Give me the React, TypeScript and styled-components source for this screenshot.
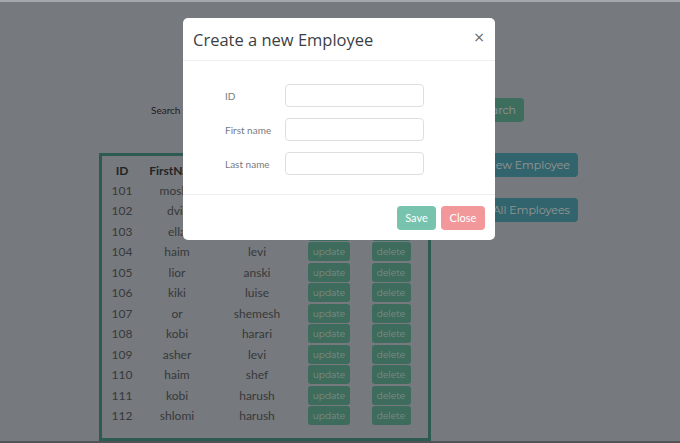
import React from "react";
import styled, { createGlobalStyle } from "styled-components";

const GlobalStyle = createGlobalStyle`
  html, body { margin: 0; padding: 0; }
  body { background: #c5cad0; font-family: "Lato", "Noto Sans", sans-serif; }
  * { box-sizing: border-box; }
`;

const Page = styled.div`
  position: relative;
  width: 680px;
  height: 443px;
  overflow: hidden;
  background: #c5cad0;
`;

const SearchRow = styled.div`
  display: flex;
  align-items: center;
  gap: 6px;
  padding: 98px 0 0 151px;
  height: 122px;
`;

const SearchLabel = styled.label`
  font-size: 10px;
  color: #33373b;
`;

const SearchInput = styled.input`
  width: 278px;
  height: 24px;
  border: 1px solid #ccc;
  border-radius: 4px;
  background: #fff;
`;

const ActionButton = styled.button`
  height: 24px;
  border: none;
  border-radius: 4px;
  background: ${(p) => p.color};
  color: #f4f6f6;
  font-family: "Montserrat", "DejaVu Sans", sans-serif;
  font-size: 11px;
  padding: 0 8px;
  text-align: center;
  white-space: nowrap;
`;

const MainRow = styled.div`
  display: flex;
  align-items: flex-start;
  padding: 31px 0 0 99px;
`;

const TableBox = styled.div`
  width: 332px;
  height: 288px;
  border: 3px solid #4b9687;
  padding-top: 5px;
`;

const Grid = styled.div`
  display: grid;
  grid-template-columns: 40px 70px 90px 54px 70px;
`;

const HeadCell = styled.div`
  height: 19px;
  display: flex;
  align-items: center;
  justify-content: center;
  font-weight: 700;
  font-size: 12px;
  color: #3a3e42;
`;

const Cell = styled.div`
  height: 20.5px;
  display: flex;
  align-items: center;
  justify-content: center;
  font-size: 12px;
  color: #5c6165;
`;

const RowButton = styled.button<{ $w: number }>`
  width: ${(p) => p.$w}px;
  height: 19px;
  border: none;
  border-radius: 3px;
  background: #67b499;
  color: rgba(255, 255, 255, 0.7);
  font-family: "Montserrat", "DejaVu Sans", sans-serif;
  font-size: 9px;
  padding: 0;
`;

const SideColumn = styled.div`
  display: flex;
  flex-direction: column;
  align-items: flex-end;
  gap: 21px;
  width: 147px;
`;

const Backdrop = styled.div`
  position: absolute;
  inset: 0;
  background: rgba(0, 0, 0, 0.4);
  background-clip: padding-box;
  border-top: 2px solid #a5a8ac;
  border-bottom: 2px solid #505356;
`;

const Modal = styled.div`
  position: absolute;
  left: 183px;
  top: 18px;
  width: 312px;
  height: 222px;
  background: #fff;
  border-radius: 5px;
  display: flex;
  flex-direction: column;
`;

const ModalHeader = styled.div`
  height: 43px;
  display: flex;
  align-items: center;
  justify-content: space-between;
  padding: 0 10px;
  border-bottom: 1px solid #eceeef;
`;

const ModalTitle = styled.h5`
  margin: 0;
  font-family: "Open Sans", sans-serif;
  font-weight: 400;
  font-size: 16.5px;
  color: #3b3f44;
`;

const CloseX = styled.span`
  font-family: "DejaVu Sans", sans-serif;
  font-size: 14px;
  color: #666;
  margin-top: -4px;
`;

const ModalBody = styled.div`
  flex: 1;
  display: flex;
  flex-direction: column;
  gap: 11px;
  padding: 23px 0 0 42px;
  border-bottom: 1px solid #eceeef;
`;

const FormRow = styled.div`
  display: flex;
  align-items: center;
`;

const FormLabel = styled.label`
  width: 60px;
  font-size: 10px;
  color: #777b80;
`;

const FormInput = styled.input`
  width: 139px;
  height: 23px;
  border: 1px solid #dcdfe2;
  border-radius: 4px;
  background: #fff;
`;

const ModalFooter = styled.div`
  height: 45px;
  display: flex;
  align-items: center;
  justify-content: flex-end;
  gap: 5px;
  padding: 0 10px 0 0;
`;

const FooterButton = styled.button<{ $w: number }>`
  width: ${(p) => p.$w}px;
  height: 24px;
  border: none;
  border-radius: 4px;
  background: ${(p) => p.color};
  color: #fff;
  font-family: "Lato", sans-serif;
  font-size: 11px;
  padding: 0;
`;

const employees = [
  ["101", "moshe", "cohen"],
  ["102", "dvir", "levi"],
  ["103", "ella", "ronen"],
  ["104", "haim", "levi"],
  ["105", "lior", "anski"],
  ["106", "kiki", "luise"],
  ["107", "or", "shemesh"],
  ["108", "kobi", "harari"],
  ["109", "asher", "levi"],
  ["110", "haim", "shef"],
  ["111", "kobi", "harush"],
  ["112", "shlomi", "harush"],
];

export default function App() {
  return (
    <>
      <GlobalStyle />
      <Page>
        <SearchRow>
          <SearchLabel>Search</SearchLabel>
          <SearchInput />
          <ActionButton color="#66b69c">Search</ActionButton>
        </SearchRow>
        <MainRow>
          <TableBox>
            <Grid>
              <HeadCell>ID</HeadCell>
              <HeadCell>FirstName</HeadCell>
              <HeadCell>LastName</HeadCell>
              <HeadCell>Update</HeadCell>
              <HeadCell>Delete</HeadCell>
              {employees.map(([id, first, last]) => (
                <React.Fragment key={id}>
                  <Cell>{id}</Cell>
                  <Cell>{first}</Cell>
                  <Cell>{last}</Cell>
                  <Cell>
                    <RowButton $w={42}>update</RowButton>
                  </Cell>
                  <Cell>
                    <RowButton $w={39}>delete</RowButton>
                  </Cell>
                </React.Fragment>
              ))}
            </Grid>
          </TableBox>
          <SideColumn>
            <ActionButton color="#53a7b4">Add New Employee</ActionButton>
            <ActionButton color="#53a7b4">View All Employees</ActionButton>
          </SideColumn>
        </MainRow>
        <Backdrop />
        <Modal>
          <ModalHeader>
            <ModalTitle>Create a new Employee</ModalTitle>
            <CloseX>×</CloseX>
          </ModalHeader>
          <ModalBody>
            <FormRow>
              <FormLabel>ID</FormLabel>
              <FormInput />
            </FormRow>
            <FormRow>
              <FormLabel>First name</FormLabel>
              <FormInput />
            </FormRow>
            <FormRow>
              <FormLabel>Last name</FormLabel>
              <FormInput />
            </FormRow>
          </ModalBody>
          <ModalFooter>
            <FooterButton $w={39} color="#77c3ad">Save</FooterButton>
            <FooterButton $w={44} color="#f2989b">Close</FooterButton>
          </ModalFooter>
        </Modal>
      </Page>
    </>
  );
}
